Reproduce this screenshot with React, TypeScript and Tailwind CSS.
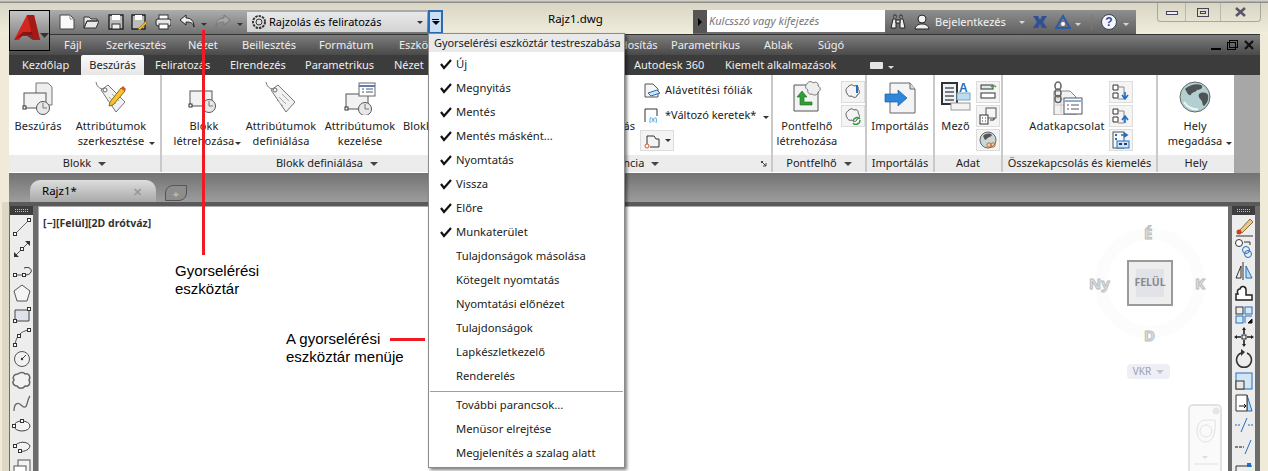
import type { ReactNode } from 'react';

const menuTabs = [
  ['Fájl', 'w-[42px]'],
  ['Szerkesztés', 'w-[82px]'],
  ['Nézet', 'w-[54px]'],
  ['Beillesztés', 'w-[77px]'],
  ['Formátum', 'w-[80px]'],
  ['Eszközök', 'w-[205px]'],
  ['Módosítás', 'w-[67px]'],
  ['Parametrikus', 'w-[93px]'],
  ['Ablak', 'w-[54px]'],
  ['Súgó', 'w-[51px]'],
];

const checked = ['Új', 'Megnyitás', 'Mentés', 'Mentés másként...', 'Nyomtatás', 'Vissza', 'Előre', 'Munkaterület'];
const unchecked = ['Tulajdonságok másolása', 'Kötegelt nyomtatás', 'Nyomtatási előnézet', 'Tulajdonságok', 'Lapkészletkezelő', 'Renderelés'];
const extra = ['További parancsok...', 'Menüsor elrejtése', 'Megjelenítés a szalag alatt'];

function Ico({ w = 16, h = 16, children }: { w?: number; h?: number; children: ReactNode }) {
  return (
    <svg width={w} height={h} viewBox={`0 0 ${w} ${h}`} fill="none" className="shrink-0">
      {children}
    </svg>
  );
}

function Caret({ light = false }: { light?: boolean }) {
  return <span className={`inline-block h-0 w-0 shrink-0 border-x-[3px] border-t-[3px] border-x-transparent ${light ? 'border-t-[#d8d8d8]' : 'border-t-[#333]'}`} />;
}

// small grip square used on the drawing tool icons
function Pt({ x, y }: { x: number; y: number }) {
  return <rect x={x - 1.5} y={y - 1.5} width="3" height="3" fill="#fff" stroke="#333" />;
}

// block symbol shared by the big ribbon buttons
function BlockGlyph({ x = 0, y = 0 }: { x?: number; y?: number }) {
  return (
    <g transform={`translate(${x} ${y})`}>
      <rect x="1" y="6" width="22" height="15" fill="#f2f2f2" stroke="#555" />
      <rect x="0" y="19" width="3" height="3" fill="#fff" stroke="#333" />
      <circle cx="20" cy="21" r="6.5" fill="#e8e8e8" stroke="#555" />
      <path d="M20 16v5h4" stroke="#777" />
    </g>
  );
}

function InsertIcon() {
  return (
    <Ico w={32} h={34}>
      <path d="M14 2h12l4 4v18H14z" fill="#eee" stroke="#777" />
      <BlockGlyph x={1} y={6} />
    </Ico>
  );
}

function TagIcon({ pencil = false }: { pencil?: boolean }) {
  return (
    <Ico w={32} h={34}>
      <path d="M1 1c1 6 6 8 9 6" stroke="#777" />
      <path d="M6 9l7-5 17 17-9 10z" fill="#f1f1f1" stroke="#777" />
      <circle cx="10" cy="9" r="2" fill="#fff" stroke="#666" />
      <path d="M14 16l7 7M17 13l7 7M12 19l6 6" stroke="#aaa" />
      {pencil && (
        <>
          <path d="M15 21l11-14 4 3-12 14-4 1z" fill="#f4c430" stroke="#8a6d10" />
          <path d="M26 7l2-2 3 3-1 2z" fill="#d9532c" />
        </>
      )}
    </Ico>
  );
}

function ManageIcon() {
  return (
    <Ico w={32} h={34}>
      <BlockGlyph x={1} y={7} />
      <rect x="15" y="2" width="16" height="13" fill="#fff" stroke="#667" />
      <path d="M15 5h16" stroke="#5a7fb0" strokeWidth="2" />
      <path d="M18 8h2M22 8h7M18 11h2M22 11h7" stroke="#556" />
    </Ico>
  );
}

function PointCloudIcon() {
  return (
    <Ico w={30} h={34}>
      <path d="M2 4h18l6 6v20H2z" fill="#f3f3f3" stroke="#555" />
      <path d="M15 3c1-3 5-3 6-1 3-2 6 0 5 3 3 1 3 5 0 6 0 3-4 4-6 2-3 1-5-2-4-4-3-1-3-5-1-6z" fill="#eee" stroke="#777" />
      <path d="M8 24V16h-3l5-6 5 6h-3v5h8v3z" fill="#2f9e3a" stroke="#1b6b24" strokeWidth=".6" />
    </Ico>
  );
}

function ImportIcon() {
  return (
    <Ico w={32} h={34}>
      <path d="M6 2h20l5 6v24H6z" fill="#f4f4f4" stroke="#666" />
      <path d="M26 2v6h5" stroke="#666" fill="#ddd" />
      <path d="M1 13h13V9l9 8-9 8v-4H1z" fill="#2f86d8" stroke="#1a5fa8" strokeWidth=".7" />
    </Ico>
  );
}

function FieldIcon() {
  return (
    <Ico w={30} h={32}>
      <rect x="1" y="2" width="15" height="21" fill="#eef1f5" stroke="#333" strokeWidth="2" />
      <path d="M4 7h9M4 11h9M4 15h9M4 19h9" stroke="#555" strokeWidth="1.4" />
      <rect x="16" y="12" width="13" height="7" fill="#bcdcf3" stroke="#7aa" />
      <rect x="10" y="22" width="19" height="7" fill="#f3f3f3" stroke="#999" />
      <text x="18" y="11" fontSize="12" fontWeight="700" fill="#1f6fc0" fontFamily="Liberation Sans">A</text>
    </Ico>
  );
}

function DataLinkIcon() {
  return (
    <Ico w={32} h={34}>
      <path d="M3 10h16l6 6v18H3z" fill="#f2f2f2" stroke="#888" />
      <path d="M3 18h14M3 24h14M10 10v22" stroke="#ccc" />
      <rect x="13" y="17" width="18" height="16" fill="#fff" stroke="#556" />
      <path d="M13 20h18" stroke="#8db0d0" strokeWidth="2" />
      <path d="M16 24h2M20 24h8M16 28h2M20 28h8" stroke="#556" />
      <ellipse cx="7" cy="5" rx="3" ry="4" stroke="#666" strokeWidth="1.6" />
      <ellipse cx="7" cy="12" rx="3" ry="4" stroke="#666" strokeWidth="1.6" />
      <ellipse cx="7" cy="18" rx="3" ry="3.5" stroke="#666" strokeWidth="1.6" />
    </Ico>
  );
}

function GlobeIcon() {
  return (
    <Ico w={32} h={32}>
      <circle cx="16" cy="16" r="15" fill="#b4cfd2" stroke="#666" />
      <path d="M6 8c4-4 12-6 16-4 3 2 0 5-4 5-2 3-6 2-6 5-3 1-4-3-6-6zM20 13c3-2 7-2 9 1 1 4-1 9-4 11-2-1-1-4-3-6-2-2-3-4-2-6z" fill="#4e5355" />
      <path d="M5 21c3 5 9 8 14 7" stroke="#eef6f6" strokeWidth="2" />
    </Ico>
  );
}

function SmallBtn({ children }: { children: ReactNode }) {
  return <div className="flex h-[22px] w-[24px] items-center justify-center border border-[#dcdcdc] bg-[#f4f4f4]">{children}</div>;
}

function SmallStackIcon({ kind }: { kind: string }) {
  if (kind === 'cloud' || kind === 'cloudsync') {
    return (
      <Ico w={18} h={18}>
        <path d="M5 3c2-2 4-1 5 0 3-1 5 1 4 3 2 2 2 5-1 6 0 3-4 3-5 1-3 1-5-1-5-3-2-2-1-5 2-7z" fill="#f4f4f4" stroke="#555" />
        {kind === 'cloud' ? <path d="M13 2v8" stroke="#1f6fc0" strokeWidth="2" /> : <path d="M9 14a4 4 0 0 1 7-2M16 13a4 4 0 0 1-7 3" stroke="#2f9e3a" strokeWidth="1.5" />}
      </Ico>
    );
  }
  if (kind === 'link') {
    return (
      <Ico w={18} h={18}>
        <rect x="2" y="2" width="12" height="4" fill="#dfe7ef" stroke="#333" />
        <rect x="2" y="10" width="14" height="5" fill="#fff" stroke="#333" />
        <path d="M12 4a3 3 0 0 1 5 0" stroke="#2f9e3a" strokeWidth="1.4" />
      </Ico>
    );
  }
  if (kind === 'table') {
    return (
      <Ico w={18} h={18}>
        <rect x="7" y="1" width="10" height="10" fill="#f6f6f6" stroke="#555" />
        <rect x="1" y="8" width="8" height="9" fill="#fff" stroke="#333" />
        <path d="M3 11h1M6 11h1M3 14h1M6 14h1" stroke="#333" />
        <path d="M11 13h4v-2" stroke="#333" />
      </Ico>
    );
  }
  if (kind === 'globe') {
    return (
      <Ico w={20} h={20}>
        <circle cx="10" cy="10" r="8" fill="#c8d8d8" stroke="#666" />
        <path d="M5 6c3-3 7-3 9-1-2 3-5 2-6 5-2 0-2-3-3-4z" fill="#555" />
        <circle cx="11" cy="15" r="2.2" stroke="#d46a1a" />
        <circle cx="15" cy="15" r="2.2" stroke="#d46a1a" />
      </Ico>
    );
  }
  const dir = kind === 'down' ? 'M13 9v6M10 12l3 4 3-4' : kind === 'up' ? 'M13 16v-6M10 13l3-4 3 4' : 'M9 4h6M12 2l3 2-3 2';
  return (
    <Ico w={18} h={18}>
      {kind === 'grid' ? (
        <>
          <rect x="1" y="1" width="11" height="16" fill="#f6f6f6" stroke="#555" />
          <rect x="5" y="10" width="12" height="7" fill="#cfe2f6" stroke="#1f6fc0" />
          <path d="M7 13h3M12 13h3" stroke="#1f3f6f" strokeWidth="2" />
          <path d="M3 4h2M3 8h2" stroke="#1f6fc0" strokeWidth="2" />
        </>
      ) : (
        <>
          <path d="M1 2h5v5H1zM1 10h5v5H1z" fill="#fff" stroke="#333" />
          <path d="M6 4h6v12H6" stroke="#888" />
        </>
      )}
      <path d={dir} stroke="#1f6fc0" strokeWidth="1.6" />
    </Ico>
  );
}

function BigButton({ width, label, icon, caret = false }: { width: string; label: string[]; icon: ReactNode; caret?: boolean }) {
  return (
    <div className={`relative flex shrink-0 flex-col items-center pt-[6px] tracking-[0.1px] ${width}`}>
      <div className="flex h-[37px] items-start justify-center">{icon}</div>
      {label.map((line) => (
        <span key={line} className="whitespace-nowrap leading-[15px]">
          {line}
        </span>
      ))}
      {caret && (
        <span className="absolute right-0 top-[58px]">
          <Caret />
        </span>
      )}
    </div>
  );
}

function Panel({ width, title, caret = true, titleClass = '', launcher = false, children }: { width: string; title: string; caret?: boolean; titleClass?: string; launcher?: boolean; children: ReactNode }) {
  return (
    <section className={`flex shrink-0 flex-col border-r-2 border-[#c9c9c9] ${width}`}>
      <div className="flex h-[80px] shrink-0 overflow-hidden bg-white">{children}</div>
      <div className={`relative flex h-[17px] items-center justify-center gap-[7px] bg-[#ececec] ${titleClass}`}>
        <span>{title}</span>
        {caret && <span className="inline-block h-0 w-0 border-x-[4px] border-t-[4px] border-x-transparent border-t-[#444]" />}
        {launcher && (
          <svg width="6" height="6" viewBox="0 0 6 6" fill="none" className="absolute bottom-[5px] right-[4px]">
            <path d="M0 .5h2M.5 0v2M1 1l4 4M5 2v3H2" stroke="#444" />
          </svg>
        )}
      </div>
    </section>
  );
}

const leftTools: ReactNode[] = [
  <g key="a"><path d="M4 18L18 4" stroke="#666" /><Pt x={4} y={18} /><Pt x={18} y={4} /></g>,
  <g key="b"><path d="M4 18L18 4" stroke="#555" /><path d="M14 3h5v5zM3 14v5h5z" fill="#333" /><Pt x={11} y={11} /></g>,
  <g key="c"><path d="M4 15h9" stroke="#555" /><path d="M13 8c6-2 8 2 7 4s-3 3-6 3" stroke="#333" /><Pt x={4} y={15} /><Pt x={13} y={15} /></g>,
  <path key="d" d="M11 3l8 6-3 10H6L3 9z" fill="#f5f5f5" stroke="#555" />,
  <g key="e"><path d="M4 6h14v11H4z" fill="#dfe2ea" stroke="#444" /><Pt x={18} y={5} /><Pt x={4} y={17} /></g>,
  <g key="f"><path d="M4 19c1-9 6-14 14-15" stroke="#555" /><Pt x={4} y={19} /><Pt x={8} y={10} /><Pt x={18} y={4} /></g>,
  <g key="g"><circle cx="11" cy="11" r="7.5" fill="#f1f1f1" stroke="#555" /><path d="M11 11l4-4" stroke="#444" /><circle cx="11" cy="11" r="1.2" fill="#333" /></g>,
  <path key="h" d="M7 4c2-2 6-2 7 0 4-1 6 3 4 6 2 3 0 7-4 6-2 3-6 3-8 0-4 0-5-4-3-6-2-3 0-6 4-6z" fill="#f2f2f2" stroke="#666" strokeWidth="1.5" />,
  <path key="i" d="M3 19c0-8 4-9 7-6s5 3 6-1 2-7 3-8" stroke="#666" strokeWidth="1.3" />,
  <g key="j"><ellipse cx="11" cy="12" rx="8" ry="5" fill="#f3f3f3" stroke="#444" /><Pt x={11} y={7} /><Pt x={3} y={12} /></g>,
  <g key="k"><path d="M4 10c3-5 13-5 15 0-1 5-8 6-11 5" fill="#f3f3f3" stroke="#444" /><Pt x={4} y={10} /><Pt x={9} y={15} /></g>,
  <g key="l"><rect x="7" y="2" width="12" height="14" fill="#f3f3f3" stroke="#555" /><rect x="3" y="8" width="12" height="12" fill="#fff" stroke="#555" /></g>,
];

const rightTools: ReactNode[] = [
  <g key="a"><path d="M6 15L17 3l3 3-11 11z" fill="#e9c98a" stroke="#8a6d3a" /><circle cx="6" cy="16" r="2.5" fill="#c8401a" /><path d="M3 20h17" stroke="#333" /></g>,
  <g key="b"><circle cx="6" cy="5" r="3.5" fill="#fff" stroke="#333" /><path d="M11 4h6v3" stroke="#333" /><circle cx="13" cy="12" r="3.5" stroke="#1f6fc0" /><circle cx="15" cy="16" r="3.5" stroke="#1f6fc0" /></g>,
  <g key="c"><path d="M10 2v18" stroke="#333" /><path d="M8 6L3 18h5z" stroke="#333" /><path d="M13 6l6 12h-6z" fill="#bcdcf3" stroke="#1f6fc0" /></g>,
  <path key="d" d="M3 18h16v-5h-6V8c0-4-5-5-6-1-3 0-3 3-2 5H3z" fill="#fff" stroke="#222" strokeWidth="1.5" />,
  <g key="e"><rect x="3" y="3" width="7" height="7" stroke="#333" /><rect x="12" y="3" width="7" height="7" fill="#d8e8f6" stroke="#1f6fc0" /><rect x="3" y="12" width="7" height="7" fill="#d8e8f6" stroke="#1f6fc0" /><path d="M12 19v-7h7" stroke="#1f6fc0" /><path d="M19 15v4h-4z" stroke="#111" fill="#111" /></g>,
  <g key="f"><rect x="9" y="9" width="4" height="4" stroke="#222" /><path d="M11 3v5M11 14v5M3 11h5M14 11h5" stroke="#222" strokeWidth="1.6" /><path d="M9 4l2-3 2 3zM9 18l2 3 2-3zM4 9l-3 2 3 2zM18 9l3 2-3 2z" fill="#222" /></g>,
  <g key="g"><path d="M8 5a7.5 7.5 0 1 0 6 0" stroke="#333" strokeWidth="1.5" /><path d="M8 1v7l4-4z" fill="#333" /></g>,
  <g key="h"><rect x="3" y="3" width="16" height="16" fill="#d3e6f6" stroke="#1f6fc0" /><rect x="3" y="11" width="8" height="8" fill="#e8e8e8" stroke="#333" /></g>,
  <g key="i"><path d="M14 3l5 16h-5z" fill="#bcdcf3" stroke="#1f6fc0" /><path d="M3 3h11v16H3z" fill="#fff" stroke="#333" /><path d="M6 14h7M11 12l2 2-2 2" stroke="#111" /></g>,
  <g key="j"><path d="M2 11h5M15 11h6" stroke="#1f6fc0" strokeDasharray="2 1" /><path d="M8 18l6-14" stroke="#1f6fc0" /></g>,
  <g key="k"><path d="M2 11h9" stroke="#111" strokeDasharray="3 1" /><path d="M12 18l6-14" stroke="#1f6fc0" /></g>,
  <g key="l"><path d="M3 20V8h16" stroke="#333" /><rect x="14" y="5" width="4" height="4" fill="#1f6fc0" /></g>,
];

function ToolColumn({ tools }: { tools: ReactNode[] }) {
  return (
    <div className="flex w-[23px] shrink-0 flex-col items-center overflow-hidden bg-[#ededed]">
      <div className="flex h-[9px] w-full shrink-0 items-center justify-center bg-[#3d3d3d]">
        <span className="h-[3px] w-[13px] border-y border-dotted border-[#bbb]" />
      </div>
      <div className="flex flex-col items-center pt-[1px]">
        {tools.map((t, i) => (
          <Ico key={i} w={22} h={22}>
            {t}
          </Ico>
        ))}
      </div>
    </div>
  );
}

export default function App() {
  return (
    <div className="relative flex h-[471px] w-[1268px] flex-col overflow-hidden bg-[#efebd8] font-['Noto_Sans',sans-serif] text-[11px] text-[#222]">
      {/* window frame + glass title bar */}
      <div className="h-[3px] shrink-0 bg-gradient-to-b from-[#e2dfd2] to-[#7f7f7f]" />
      <header className="flex h-[31px] shrink-0 bg-gradient-to-b from-[#d9d5c5] to-[#f1eddb] pl-[50px] pt-[7px]">
        <div className="flex h-[24px] w-[378px] items-center bg-gradient-to-b from-[#adadad] to-[#727272] pl-[9px]">
          <Ico><path d="M1 1h10l4 4v10H1z" fill="#fbfbfb" stroke="#444" /><path d="M11 1v4h4" stroke="#888" /></Ico>
          <span className="w-[8px]" />
          <Ico><path d="M1 3h5l2 2h6v2H4L1 14zM1 14l3-7h12l-3 7z" fill="#e8e8e8" stroke="#333" /></Ico>
          <span className="w-[9px]" />
          <Ico><path d="M1 1h14v14H1z" fill="#bbb" stroke="#222" strokeWidth="1.4" /><rect x="4" y="1" width="8" height="5" fill="#fff" /><rect x="4" y="10" width="8" height="5" fill="#eee" stroke="#333" /></Ico>
          <span className="w-[7px]" />
          <Ico><path d="M1 1h13v14H1z" fill="#bbb" stroke="#222" strokeWidth="1.4" /><rect x="4" y="1" width="7" height="5" fill="#fff" /><path d="M7 15l8-8 1 2-7 7z" fill="#f0b429" stroke="#8a6d10" strokeWidth=".6" /></Ico>
          <span className="w-[8px]" />
          <Ico><rect x="4" y="1" width="9" height="5" fill="#fff" stroke="#333" /><rect x="1" y="5" width="15" height="7" rx="2" fill="#e6e6e6" stroke="#222" /><rect x="4" y="10" width="9" height="5" fill="#fff" stroke="#333" /></Ico>
          <span className="w-[8px]" />
          <Ico><path d="M1 6l6-5v3c5 0 8 3 8 9-1-4-3-5-8-5v3z" fill="#eee" stroke="#222" /></Ico>
          <span className="ml-[6px] mr-[8px]"><Caret /></span>
          <Ico><path d="M15 6L9 1v3C4 4 1 7 1 13c1-4 3-5 8-5v3z" fill="#a7a7a7" stroke="#777" /></Ico>
          <span className="ml-[6px] mr-[4px]"><Caret /></span>
          <div className="flex h-[20px] w-[180px] items-center bg-gradient-to-b from-[#e9e9e9] to-[#d3d3d3] pl-[4px] pr-[4px]">
            <Ico><circle cx="8" cy="8" r="3" stroke="#333" /><circle cx="8" cy="8" r="6" stroke="#333" strokeDasharray="2.4 1" strokeWidth="2" /></Ico>
            <span className="ml-[2px] flex-1 text-black">Rajzolás és feliratozás</span>
            <Caret />
          </div>
        </div>
        <div className="flex h-[24px] w-[15px] items-center justify-center border-2 border-[#2d6bb0] bg-[#c7def5]">
          <span className="flex flex-col items-center gap-[1px]">
            <span className="h-px w-[7px] bg-black" />
            <span className="h-0 w-0 border-x-[4px] border-t-[4px] border-x-transparent border-t-black" />
          </span>
        </div>
        <div className="w-[106px] pl-[105px] pt-[1px] text-[11.5px] leading-[16px] text-black">Rajz1.dwg</div>
        <div className="ml-[144px] flex h-[24px] w-[443px] bg-[#6d6d6d]">
          <div className="flex h-[23px] w-[14px] items-center justify-center bg-[#555]">
            <span className="h-0 w-0 border-y-[4px] border-l-[4px] border-y-transparent border-l-black" />
          </div>
          <div className="flex h-[22px] w-[178px] items-center bg-white pl-[2px] italic text-[#777]">Kulcsszó vagy kifejezés</div>
          <div className="flex flex-1 items-center bg-gradient-to-b from-[#8f8f8f] to-[#606060] pl-[5px] text-white">
            <Ico><path d="M1 14l2-9h3v9zM10 14V5h3l2 9z" fill="#eee" stroke="#222" /><path d="M4 4V1h2v3M10 4V1h2v3M6 6h4v3H6z" fill="#ddd" stroke="#222" /></Ico>
            <span className="w-[8px]" />
            <Ico><circle cx="8" cy="5" r="4" fill="#f3f3f3" stroke="#222" /><path d="M1 15c1-4 4-5 7-5s6 1 7 5z" fill="#eee" stroke="#222" /></Ico>
            <span className="ml-[5px] w-[84px] text-[#f4f4f4]">Bejelentkezés</span>
            <Caret light />
            <span className="w-[7px]" />
            <Ico><path d="M1 2h5l2 4 2-4h5l-4 6 4 6h-5l-2-4-2 4H1l4-6z" fill="#2f4f96" /></Ico>
            <span className="w-[7px]" />
            <Ico><path d="M8 2l7 12H1z" stroke="#2d5aa8" strokeWidth="2" /><circle cx="8" cy="10" r="2" fill="#fff" /></Ico>
            <span className="ml-[4px]"><Caret light /></span>
            <span className="ml-[10px] mr-[9px] h-[16px] w-px bg-[#777]" />
            <svg width="16" height="16" viewBox="0 0 16 16" className="shrink-0"><circle cx="8" cy="8" r="7.5" fill="#f4f6fb" stroke="#345" /><text x="8" y="12" textAnchor="middle" fontSize="12" fontWeight="700" fill="#1f4fa8" fontFamily="Liberation Sans">?</text></svg>
            <span className="ml-[6px]"><Caret light /></span>
          </div>
        </div>
        {/* min / max / close */}
        <div className="-mt-[7px] ml-[21px] flex h-[19px] w-[104px] rounded-b-[4px] border border-t-0 border-[#a9a79a]">
          <div className="flex w-[28px] items-center justify-center border-r border-[#b9b7a9] pt-[2px]">
            <span className="h-[4px] w-[12px] border border-[#445] bg-[#eef]" />
          </div>
          <div className="flex w-[35px] items-center justify-center border-r border-[#b9b7a9]">
            <span className="flex h-[9px] w-[12px] items-center justify-center border border-[#445]">
              <span className="h-[3px] w-[6px] border border-[#445]" />
            </span>
          </div>
          <div className="flex flex-1 items-center justify-center">
            <svg width="11" height="10" viewBox="0 0 11 10" fill="none"><path d="M1 1l9 8M10 1L1 9" stroke="#556" strokeWidth="2.4" /></svg>
          </div>
        </div>
      </header>

      <div className="flex shrink-0 flex-col pl-[9px] pr-[8px]">
        {/* menu bar */}
        <nav className="flex h-[21px] items-center border-t border-[#333] bg-gradient-to-b from-[#7d7d7d] to-[#4a4a4a] pl-[55px] text-[#eee]">
          {menuTabs.map(([name, width]) => (
            <span key={name} className={`shrink-0 whitespace-nowrap ${width}`}>{name}</span>
          ))}
          <span className="ml-auto flex items-center gap-[6px] pr-[6px]">
            <span className="mt-[8px] h-[2px] w-[10px] bg-black" />
            <span className="relative mt-[2px] h-[8px] w-[9px] border border-black">
              <span className="absolute -right-[3px] -top-[3px] h-[8px] w-[9px] border border-black" />
            </span>
            <svg width="10" height="10" viewBox="0 0 10 10" fill="none" className="ml-[2px]"><path d="M1 1l8 8M9 1L1 9" stroke="#111" strokeWidth="2.2" /></svg>
          </span>
        </nav>

        {/* ribbon tabs */}
        <div className="flex h-[20px] items-center bg-[#3c3c3c] pl-[13px] text-[#eee]">
          <span className="w-[59px] shrink-0">Kezdőlap</span>
          <span className="mr-[11px] flex h-[20px] w-[63px] shrink-0 items-center justify-center rounded-t-[2px] bg-gradient-to-b from-[#fafafa] to-[#e6e6e6] text-[#222]">Beszúrás</span>
          <span className="w-[75px] shrink-0">Feliratozás</span>
          <span className="w-[75px] shrink-0">Elrendezés</span>
          <span className="w-[89px] shrink-0">Parametrikus</span>
          <span className="w-[240px] shrink-0">Nézet</span>
          <span className="w-[91px] shrink-0">Autodesk 360</span>
          <span className="w-[145px] shrink-0 whitespace-nowrap">Kiemelt alkalmazások</span>
          <span className="h-[7px] w-[13px] rounded-[1px] bg-[#e4e4e4]" />
          <span className="ml-[5px]"><Caret light /></span>
        </div>

        {/* ribbon panels */}
        <div className="flex h-[98px] bg-gradient-to-r from-[#777] to-[#a8a8a8]">
          <div className="flex w-[1225px] shrink-0 border-b border-white">
            <Panel width="w-[153px]" title="Blokk">
              <BigButton width="w-[58px]" label={['Beszúrás']} icon={<InsertIcon />} />
              <BigButton width="w-[88px]" label={['Attribútumok', 'szerkesztése']} icon={<TagIcon pencil />} caret />
            </Panel>
            <Panel width="w-[332px]" title="Blokk definiálása">
              <div className="w-[5px] shrink-0" />
              <BigButton width="w-[74px]" label={['Blokk', 'létrehozása']} icon={<Ico w={32} h={34}><BlockGlyph x={1} y={4} /></Ico>} caret />
              <BigButton width="w-[80px]" label={['Attribútumok', 'definiálása']} icon={<TagIcon />} />
              <BigButton width="w-[78px]" label={['Attribútumok', 'kezelése']} icon={<ManageIcon />} />
              <div className="pl-[4px] pt-[43px] tracking-[0.1px]">Blokk</div>
            </Panel>
            <Panel width="w-[279px]" title="Referencia" titleClass="pr-[16px]" launcher>
              <div className="flex w-[143px] shrink-0 justify-end pr-[2px] pt-[43px]">ás</div>
              <div className="flex flex-col gap-[8px] pl-[6px] pt-[7px]">
                <div className="flex items-center gap-[4px] tracking-[0.2px]">
                  <Ico w={18} h={16}><path d="M2 2h8l5 5v8H2z" stroke="#555" fill="#f5f5f5" /><path d="M5 11l9-3 3 3-9 3z" fill="#cfe2f6" stroke="#1f6fc0" /></Ico>
                  <span className="whitespace-nowrap">Alávetítési fóliák</span>
                </div>
                <div className="flex items-center gap-[4px]">
                  <Ico w={18} h={16}><path d="M2 15V2h12v7" stroke="#333" /><text x="6" y="15" fontSize="7" fill="#1f6fc0" fontFamily="Liberation Sans">(x)</text></Ico>
                  <span className="whitespace-nowrap">*Változó keretek*</span>
                  <span className="ml-[3px]"><Caret /></span>
                </div>
                <div className="-ml-[3px] -mt-[1px] flex h-[21px] w-[34px] items-center justify-center gap-[4px] border border-[#dcdcdc] bg-[#f4f4f4]">
                  <Ico w={18} h={16}><path d="M4 11V3h7l2 3h3v8H7" stroke="#333" /><circle cx="4" cy="13" r="2" stroke="#d9532c" fill="#fff" /></Ico>
                  <Caret />
                </div>
              </div>
            </Panel>
            <Panel width="w-[94px]" title="Pontfelhő">
              <BigButton width="w-[68px]" label={['Pontfelhő', 'létrehozása']} icon={<PointCloudIcon />} />
              <div className="flex flex-col gap-[2px] pt-[6px]">
                <SmallBtn><SmallStackIcon kind="cloud" /></SmallBtn>
                <SmallBtn><SmallStackIcon kind="cloudsync" /></SmallBtn>
              </div>
            </Panel>
            <Panel width="w-[68px]" title="Importálás" caret={false}>
              <BigButton width="w-[66px]" label={['Importálás']} icon={<ImportIcon />} />
            </Panel>
            <Panel width="w-[68px]" title="Adat" caret={false}>
              <BigButton width="w-[41px]" label={['Mező']} icon={<FieldIcon />} />
              <div className="flex flex-col gap-[2px] pt-[6px]">
                <SmallBtn><SmallStackIcon kind="link" /></SmallBtn>
                <SmallBtn><SmallStackIcon kind="table" /></SmallBtn>
                <SmallBtn><SmallStackIcon kind="globe" /></SmallBtn>
              </div>
            </Panel>
            <Panel width="w-[155px]" title="Összekapcsolás és kiemelés" caret={false}>
              <BigButton width="w-[106px] pl-[22px] tracking-[0.2px]" label={['Adatkapcsolat']} icon={<DataLinkIcon />} />
              <div className="flex flex-col gap-[2px] pt-[6px]">
                <SmallBtn><SmallStackIcon kind="down" /></SmallBtn>
                <SmallBtn><SmallStackIcon kind="up" /></SmallBtn>
                <SmallBtn><SmallStackIcon kind="grid" /></SmallBtn>
              </div>
            </Panel>
            <section className="flex w-[76px] shrink-0 flex-col">
              <div className="flex h-[80px] bg-white">
                <BigButton width="w-[74px]" label={['Hely', 'megadása']} icon={<GlobeIcon />} caret />
              </div>
              <div className="flex h-[17px] items-center justify-center bg-[#ececec]">Hely</div>
            </section>
          </div>
        </div>

        {/* file tabs */}
        <div className="flex h-[29px] items-end bg-gradient-to-b from-[#737373] to-[#9d9d9d] pl-[21px]">
          <div className="flex h-[22px] w-[126px] items-center justify-between rounded-t-[10px] bg-gradient-to-b from-[#dedede] to-[#a9a9a9] pl-[12px] pr-[14px] text-[11.5px] text-black">
            <span>Rajz1*</span>
            <span className="text-[11px] font-bold leading-none text-[#999]">✕</span>
          </div>
          <div className="mb-[1px] ml-[9px] flex h-[16px] w-[22px] items-center justify-center rounded-tl-[8px] rounded-br-[8px] border border-[#555] bg-[#8d8d8d] text-[11px] font-bold leading-none text-[#bbb]">+</div>
        </div>
      </div>

      {/* drawing area */}
      <main className="flex min-h-0 flex-1 pl-[2px]">
        <div className="w-[7px] shrink-0 bg-[#dcd8c4]" />
        <div className="flex min-w-0 flex-1 border-t-[4px] border-[#5a5a5a] bg-[#6c6c6c]">
          <div className="pl-px"><ToolColumn tools={leftTools} /></div>
          <div className="relative ml-[5px] min-w-0 flex-1 border-l border-t border-[#aaa] bg-white">
            <span className="absolute left-[4px] top-[9px] text-[10.5px] font-bold text-[#333]">[−][Felül][2D drótváz]</span>

            {/* view cube */}
            <div className="absolute left-[1056px] top-[21px] h-[110px] w-[110px] rounded-full border-[12px] border-[#fcfcfc]" />
            <div className="absolute left-[1088px] top-[53px] flex h-[46px] w-[46px] items-center justify-center border-2 border-[#9a9a9a] bg-[#eeeeee]">
              <span className="flex h-[28px] w-[28px] items-center justify-center bg-[#e2e3e8] text-[10.5px] font-bold text-[#8a8a8a]">FELÜL</span>
            </div>
            <span className="absolute left-[1105px] top-[15px] text-[15px] font-bold text-[#e2e2e2] [-webkit-text-stroke:1px_#bdbdbd]">É</span>
            <span className="absolute left-[1156px] top-[65px] text-[15px] font-bold text-[#e2e2e2] [-webkit-text-stroke:1px_#bdbdbd]">K</span>
            <span className="absolute left-[1105px] top-[117px] text-[15px] font-bold text-[#e2e2e2] [-webkit-text-stroke:1px_#bdbdbd]">D</span>
            <span className="absolute left-[1050px] top-[65px] text-[15px] font-bold text-[#e2e2e2] [-webkit-text-stroke:1px_#bdbdbd]">Ny</span>
            <div className="absolute left-[1088px] top-[157px] flex h-[15px] w-[43px] items-center justify-center gap-[5px] rounded-[4px] bg-[#eeeef6] text-[10px] text-[#a0a0a8]">
              VKR
              <span className="h-0 w-0 border-x-[4px] border-t-[4px] border-x-transparent border-t-[#c4c4cc]" />
            </div>

            {/* navigation bar */}
            <div className="absolute left-[1149px] top-[197px] h-[80px] w-[34px] rounded-[5px] border-2 border-[#e2e2e2] bg-[#fafafa]">
              <svg width="30" height="62" viewBox="0 0 30 62" fill="none">
                <circle cx="26" cy="5" r="3.5" fill="#e6e6e6" />
                <path d="M7 25c0-8 4-11 9-11h9c1 10-1 22-9 22-6 0-9-5-9-11z" stroke="#e2e2e2" />
                <circle cx="16" cy="25" r="6" stroke="#e2e2e2" />
                <path d="M12 50h6l-3 3z" fill="#ddd" />
                <path d="M4 58h24" stroke="#e2e2e2" />
              </svg>
            </div>
          </div>
          <div className="ml-[4px]"><ToolColumn tools={rightTools} /></div>
          <div className="w-[5px] shrink-0" />
        </div>
        <div className="w-[8px] shrink-0 bg-[#efebd8]" />
      </main>

      {/* dropdown opened from the quick access toolbar */}
      <div className="absolute left-[428px] top-[33px] w-[197px] border border-[#8b8b8b] bg-white text-[11.25px] text-[#222] shadow-[2px_2px_3px_rgba(0,0,0,0.5)]">
        <div className="flex h-[18px] items-center bg-[#e9e9e9] pl-[5px] text-[11px] tracking-[-0.08px]">Gyorselérési eszköztár testreszabása</div>
        <div className="flex flex-col pb-[2px]">
          {checked.map((item) => (
            <div key={item} className="flex h-[24px] items-center pl-[11px]">
              <Ico w={16} h={12}><path d="M1 6l3 4 7-8" stroke="#111" strokeWidth="2.2" /></Ico>
              <span>{item}</span>
            </div>
          ))}
          {unchecked.map((item) => (
            <div key={item} className="flex h-[24px] items-center pl-[27px]">{item}</div>
          ))}
          <div className="mx-[1px] mb-[1px] mt-[3px] h-px bg-[#a0a0a0]" />
          {extra.map((item) => (
            <div key={item} className="flex h-[24px] items-center pl-[27px]">{item}</div>
          ))}
        </div>
      </div>

      {/* red callouts */}
      <div className="absolute left-[202px] top-[30px] h-[225px] w-[3px] bg-[#ed1c24]" />
      <div className="absolute left-[390px] top-[338px] h-[3px] w-[35px] bg-[#ed1c24]" />
      <div className="absolute left-[175px] top-[262px] font-['Liberation_Sans',sans-serif] text-[15px] leading-[18px] text-black">
        Gyorselérési
        <br />
        eszköztár
      </div>
      <div className="absolute left-[286px] top-[330px] font-['Liberation_Sans',sans-serif] text-[15px] leading-[18px] text-black">
        A gyorselérési
        <br />
        eszköztár menüje
      </div>

      {/* application button */}
      <div className="absolute left-[9px] top-[10px] flex h-[41px] w-[41px] border border-black bg-gradient-to-b from-[#c4c4c4] to-[#6a6a6a]">
        <svg width="39" height="39" viewBox="0 0 39 39" fill="none">
          <path d="M4 29L17 4h7l6 25h-7l-1-5h-9l-4 5z" fill="#d3261f" />
          <path d="M17 4h7l6 25h-7L19 11z" fill="#a51a15" />
          <path d="M4 29l9-8h9l1 8-6-4-5 0z" fill="#6d100e" opacity=".75" />
          <path d="M30 22h9l-4.500 5z" fill="#333" />
        </svg>
      </div>
    </div>
  );
}
